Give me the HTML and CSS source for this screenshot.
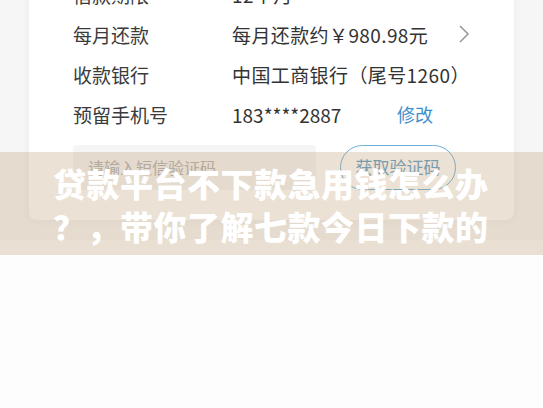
FILE: index.html
```html
<!doctype html>
<html>
<head>
<meta charset="utf-8">
<link rel="stylesheet" href="styles.css">
</head>
<body>
<div class="page">
	<div class="shot">
		<div class="card">
			<div class="row"><span class="label">借款期限</span><span class="value">12个月</span></div>
			<div class="row"><span class="label">每月还款</span><span class="value">每月还款约￥980.98元</span>
				<svg class="arrow" width="12" height="20" viewBox="0 0 12 20"><polyline points="2,2 10,10 2,18" fill="none" stroke="#9a9a9a" stroke-width="1.6"/></svg>
			</div>
			<div class="row"><span class="label">收款银行</span><span class="value">中国工商银行（尾号1260）</span></div>
			<div class="row"><span class="label">预留手机号</span><span class="value phone">183****2887</span><a class="edit">修改</a></div>
			<div class="code">
				<div class="input">请输入短信验证码</div>
				<div class="btn">获取验证码</div>
			</div>
		</div>
	</div>
	<div class="band">
		<h1>贷款平台不下款急用钱怎么办？，带你了解七款今日下款的</h1>
	</div>
</div>
</body>
</html>
```
FILE: styles.css
```css
* {margin:0; padding:0; box-sizing:border-box;}
body {background:#fdfdfd; font-family:"Noto Sans CJK SC","Noto Sans",sans-serif;}
.page {position:relative; width:543px; height:408px; overflow:hidden;}
.shot {height:240px; background:#f6f6f6; overflow:hidden;}
.card {width:485px; margin:-26px 0 0 29px; padding:0 44px 30px 44px; background:#fff; border-radius:8px; box-shadow:0 0 10px rgba(0,0,0,0.05);}
.row {display:flex; align-items:center; height:40px; font-size:19px; color:#3b3b3b;}
.label {width:159px;}
.value {color:#333; letter-spacing:0.4px;}
.phone {width:165px; letter-spacing:0;}
.arrow {margin-left:auto;}
.edit {color:#3d8fcc; font-size:18px;}
.code {display:flex; align-items:center; gap:24px; margin-top:11px;}
.input {width:243px; height:45px; background:#f5f5f5; border-radius:4px; padding-left:15px; line-height:45px; font-size:16px; color:#b0b0b0;}
.btn {width:116px; height:45px; border:1.5px solid #6ab0da; border-radius:23px; text-align:center; line-height:42px; font-size:17px; color:#5a9cc8;}
.band {position:absolute; left:0; top:152px; width:543px; height:103px; background:rgba(188,155,112,0.3); padding:10px 0 0 53px;}
.band h1 {width:445px; font-size:33px; line-height:43px; font-weight:900; color:#fff; letter-spacing:0.5px; line-break:anywhere;}
```
